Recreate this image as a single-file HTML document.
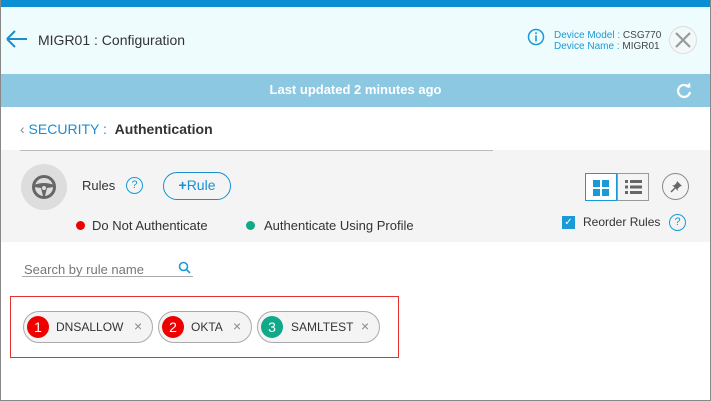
<!DOCTYPE html>
<html><head><style>
*{box-sizing:border-box;margin:0;padding:0}
body{width:711px;height:401px;overflow:hidden;font-family:"Liberation Sans",sans-serif;background:#fff;position:relative}
.frame{position:absolute;left:0;top:0;width:711px;height:401px;border:1px solid #888;border-top:none}
.abs{position:absolute}
</style></head><body>
<div class="abs" style="left:0;top:0;width:711px;height:7px;background:#0a8fd4"></div>
<div class="abs" style="left:0;top:7px;width:711px;height:67px;background:#effcfd"></div>
<svg class="abs" style="left:6px;top:30px" width="22" height="18" viewBox="0 0 22 18"><path d="M1 9H21M1 9L9 1M1 9L9 17" stroke="#1a8fd0" stroke-width="2" fill="none"/></svg>
<div class="abs" style="left:38px;top:32px;font-size:14px;color:#333">MIGR01 : Configuration</div>
<svg class="abs" style="left:527px;top:28px" width="18" height="18" viewBox="0 0 18 18"><circle cx="9" cy="9" r="7.5" stroke="#1a9ad6" stroke-width="1.5" fill="none"/><rect x="8.2" y="7.5" width="1.6" height="6" fill="#1a9ad6"/><rect x="8.2" y="4.3" width="1.6" height="1.8" fill="#1a9ad6"/></svg>
<div class="abs" style="left:554px;top:30px;font-size:10px;line-height:11px;color:#1a9ad6">Device Model : <span style="color:#444">CSG770</span><br>Device Name : <span style="color:#444">MIGR01</span></div>
<div class="abs" style="left:669px;top:26px;width:28px;height:28px;border-radius:50%;border:1px solid #ddd;background:#f3f8f8"></div>
<svg class="abs" style="left:674px;top:31px" width="18" height="18"><path d="M2 2L16 16M16 2L2 16" stroke="#999" stroke-width="2.2"/></svg>
<div class="abs" style="left:0;top:74px;width:711px;height:33px;background:#8cc8e2"></div>
<div class="abs" style="left:0;top:82px;width:711px;text-align:center;font-size:13px;font-weight:bold;color:#fff">Last updated 2 minutes ago</div>
<svg class="abs" style="left:675px;top:82px" width="18" height="18" viewBox="0 0 18 18"><path d="M14 5.5A6 6 0 1 0 15 10" stroke="#fff" stroke-width="2.2" fill="none"/><path d="M10 5L15.5 5.5L15 0.5Z" fill="#fff"/></svg>
<div class="abs" style="left:20px;top:121px;font-size:14px;color:#1a8fd0"><span style="color:#888">&#x2039;</span> SECURITY : <span style="color:#333;font-weight:bold">&nbsp;Authentication</span></div>
<div class="abs" style="left:0;top:150px;width:711px;height:92px;background:#f4f4f4"></div>
<div class="abs" style="left:20px;top:150px;width:473px;height:1px;background:#bbb"></div>
<div class="abs" style="left:21px;top:164px;width:46px;height:46px;border-radius:50%;background:#ddd"></div>
<svg class="abs" style="left:31px;top:174px" width="26" height="26" viewBox="0 0 26 26"><circle cx="13" cy="13" r="10.5" stroke="#666" stroke-width="3" fill="none"/><path d="M3 11Q13 7 23 11L23 13L16 14L14 22H12L10 14L3 13Z" fill="#666"/><circle cx="13" cy="14" r="2" fill="#ddd"/></svg>
<div class="abs" style="left:82px;top:178px;font-size:13px;color:#333">Rules</div>
<div class="abs" style="left:126px;top:177px;width:17px;height:17px;border-radius:50%;border:1.5px solid #1a9ad6;color:#1a9ad6;font-size:11px;text-align:center;line-height:14px">?</div>
<div class="abs" style="left:163px;top:172px;width:68px;height:28px;border-radius:14px;border:1.3px solid #1a8fd0;color:#1a8fd0;font-size:14px;text-align:center;line-height:25px"><b>+</b>Rule</div>
<div class="abs" style="left:585px;top:173px;width:32px;height:28px;border:1.5px solid #1a9ad6;background:#fff"></div>
<svg class="abs" style="left:593px;top:180px" width="16" height="16"><rect x="0" y="0" width="7" height="7" fill="#1a9ad6"/><rect x="9" y="0" width="7" height="7" fill="#1a9ad6"/><rect x="0" y="9" width="7" height="7" fill="#1a9ad6"/><rect x="9" y="9" width="7" height="7" fill="#1a9ad6"/></svg>
<div class="abs" style="left:617px;top:173px;width:32px;height:28px;border:1px solid #999;background:#f4f4f4"></div>
<svg class="abs" style="left:625px;top:180px" width="17" height="14"><g fill="#666"><rect x="0" y="0" width="3" height="3"/><rect x="5" y="0" width="12" height="3"/><rect x="0" y="5.5" width="3" height="3"/><rect x="5" y="5.5" width="12" height="3"/><rect x="0" y="11" width="3" height="3"/><rect x="5" y="11" width="12" height="3"/></g></svg>
<div class="abs" style="left:662px;top:173px;width:27px;height:27px;border-radius:50%;border:1px solid #888"></div>
<svg class="abs" style="left:668px;top:179px" width="16" height="16" viewBox="0 0 16 16"><path d="M3 13L7 9" stroke="#666" stroke-width="1.5"/><path d="M9 2L14 7L12 7.5L9.5 10L10 12L4 6L6 6.5L8.5 4Z" fill="#666"/></svg>
<div class="abs" style="left:76px;top:221px;width:9px;height:9px;border-radius:50%;background:#e00"></div>
<div class="abs" style="left:92px;top:218px;font-size:13px;color:#333">Do Not Authenticate</div>
<div class="abs" style="left:246px;top:221px;width:9px;height:9px;border-radius:50%;background:#12a88a"></div>
<div class="abs" style="left:264px;top:218px;font-size:13px;color:#333">Authenticate Using Profile</div>
<div class="abs" style="left:562px;top:216px;width:13px;height:13px;background:#1a9ad6;color:#fff;font-size:10px;line-height:13px;text-align:center">✓</div>
<div class="abs" style="left:583px;top:215px;font-size:12px;color:#333">Reorder Rules</div>
<div class="abs" style="left:669px;top:214px;width:17px;height:17px;border-radius:50%;border:1.5px solid #1a9ad6;color:#1a9ad6;font-size:11px;text-align:center;line-height:14px">?</div>
<div class="abs" style="left:24px;top:262px;font-size:13px;color:#777">Search by rule name</div>
<svg class="abs" style="left:178px;top:261px" width="13" height="13"><circle cx="5.5" cy="5.5" r="4" stroke="#1a9ad6" stroke-width="1.6" fill="none"/><path d="M8.5 8.5L12 12" stroke="#1a9ad6" stroke-width="1.6"/></svg>
<div class="abs" style="left:22px;top:276px;width:171px;height:1px;background:#aaa"></div>
<div class="abs" style="left:10px;top:296px;width:389px;height:62px;border:1px solid #e53030"></div>
<div class="abs" style="left:23px;top:311px;width:130px;height:32px;border-radius:16px;border:1px solid #aaa;background:#f4f4f4"></div>
<div class="abs" style="left:27px;top:316px;width:22px;height:22px;border-radius:50%;background:#e00;color:#fff;font-size:14px;text-align:center;line-height:22px">1</div>
<div class="abs" style="left:56px;top:320px;font-size:12px;color:#333">DNSALLOW</div>
<div class="abs" style="left:134px;top:318px;font-size:14px;color:#888">×</div>
<div class="abs" style="left:158px;top:311px;width:94px;height:32px;border-radius:16px;border:1px solid #aaa;background:#f4f4f4"></div>
<div class="abs" style="left:162px;top:316px;width:22px;height:22px;border-radius:50%;background:#e00;color:#fff;font-size:14px;text-align:center;line-height:22px">2</div>
<div class="abs" style="left:191px;top:320px;font-size:12px;color:#333">OKTA</div>
<div class="abs" style="left:233px;top:318px;font-size:14px;color:#888">×</div>
<div class="abs" style="left:257px;top:311px;width:123px;height:32px;border-radius:16px;border:1px solid #aaa;background:#f4f4f4"></div>
<div class="abs" style="left:261px;top:316px;width:22px;height:22px;border-radius:50%;background:#12a88a;color:#fff;font-size:14px;text-align:center;line-height:22px">3</div>
<div class="abs" style="left:291px;top:320px;font-size:12px;color:#333">SAMLTEST</div>
<div class="abs" style="left:361px;top:318px;font-size:14px;color:#888">×</div>
<div class="frame"></div>
</body></html>
